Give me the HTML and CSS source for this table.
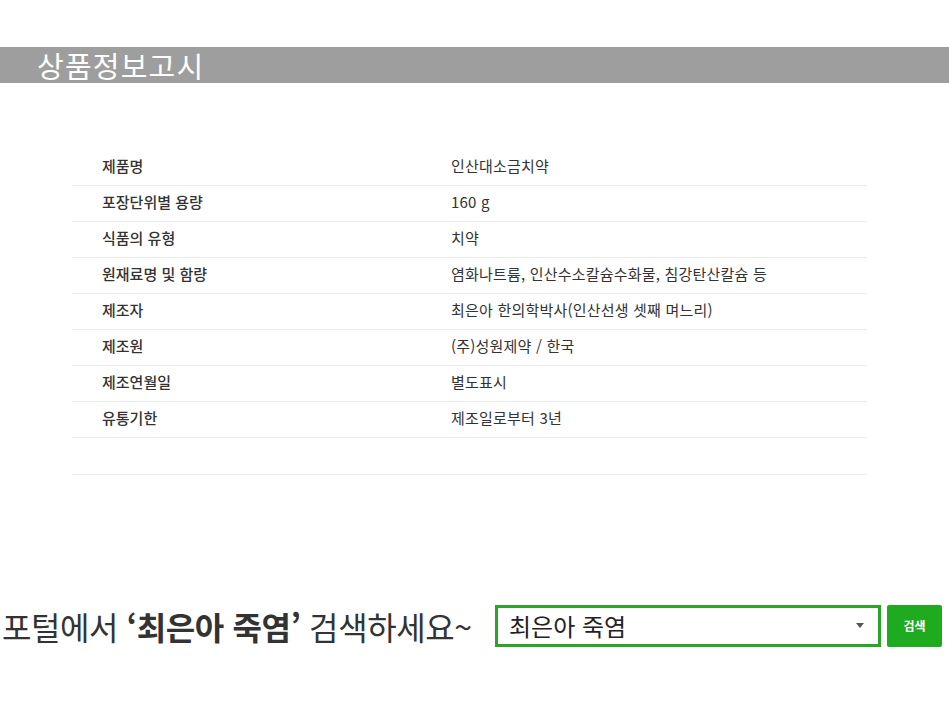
FILE: index.html
```html
<!DOCTYPE html>
<html lang="ko">
<head>
<meta charset="utf-8">
<link rel="stylesheet" href="styles.css">
</head>
<body>
<div class="page">
  <h1 class="title-bar"><span class="title">상품정보고시</span></h1>
  <div class="table-wrap">
    <table class="info">
      <tr><th>제품명</th><td>인산대소금치약</td></tr>
      <tr><th>포장단위별 용량</th><td>160 g</td></tr>
      <tr><th>식품의 유형</th><td>치약</td></tr>
      <tr><th>원재료명 및 함량</th><td>염화나트륨, 인산수소칼슘수화물, 침강탄산칼슘 등</td></tr>
      <tr><th>제조자</th><td>최은아 한의학박사(인산선생 셋째 며느리)</td></tr>
      <tr><th>제조원</th><td>(주)성원제약 / 한국</td></tr>
      <tr><th>제조연월일</th><td>별도표시</td></tr>
      <tr><th>유통기한</th><td>제조일로부터 3년</td></tr>
      <tr class="empty"><th></th><td></td></tr>
    </table>
  </div>
  <div class="search-row">
    <p class="search-text">포털에서 <b>‘최은아 죽염’</b> 검색하세요~</p>
    <div class="search-box">
      <span class="query">최은아 죽염</span>
      <span class="caret"></span>
    </div>
    <div class="search-btn">검색</div>
  </div>
</div>
</body>
</html>
```
FILE: styles.css
```css
* { box-sizing: border-box; }
html, body { margin: 0; padding: 0; background: #fff; }
body {
  font-family: "Noto Sans CJK KR", "Noto Sans", sans-serif;
  color: #333;
}
.page { width: 949px; padding-top: 47px; }
.title-bar {
  margin: 0;
  height: 36px;
  background: #9e9e9e;
  display: flex;
  align-items: center;
  padding-left: 37px;
}
.title {
  color: #fff;
  font-size: 29px;
  font-weight: 400;
  letter-spacing: 1.2px;
  line-height: 36px;
}
.table-wrap { padding: 66px 82px 0 72px; }
.info {
  width: 100%;
  border-collapse: collapse;
}
.info th, .info td {
  height: 36px;
  font-size: 15px;
  font-weight: 400;
  text-align: left;
  color: #333;
  padding: 0 0 3px 0;
  border-bottom: 1px solid #ebebeb;
  letter-spacing: 0.2px;
}
.info th { width: 379px; padding-left: 30px; font-weight: 500; letter-spacing: 0; }
.info tr.empty th, .info tr.empty td { height: 37px; }
.search-row {
  margin-top: 130px;
  display: flex;
  align-items: center;
  height: 42px;
}
.search-text {
  margin: 0 0 0 2px;
  font-size: 32px;
  color: #333;
  letter-spacing: -0.4px;
  white-space: nowrap;
  width: 493px;
}
.search-text b { font-weight: 700; }
.search-box {
  width: 386px;
  height: 42px;
  border: 3px solid #2aa52a;
  display: flex;
  align-items: center;
  padding: 0 14px 0 11px;
}
.query {
  flex: 1;
  font-size: 24px;
  color: #222;
}
.caret {
  width: 0; height: 0;
  border-left: 4px solid transparent;
  border-right: 4px solid transparent;
  border-top: 5px solid #555;
}
.search-btn {
  margin-left: 6px;
  width: 55px;
  height: 42px;
  background: #1fab1f;
  border-radius: 2px;
  color: #fff;
  font-size: 12px;
  font-weight: 700;
  display: flex;
  align-items: center;
  justify-content: center;
}
```
